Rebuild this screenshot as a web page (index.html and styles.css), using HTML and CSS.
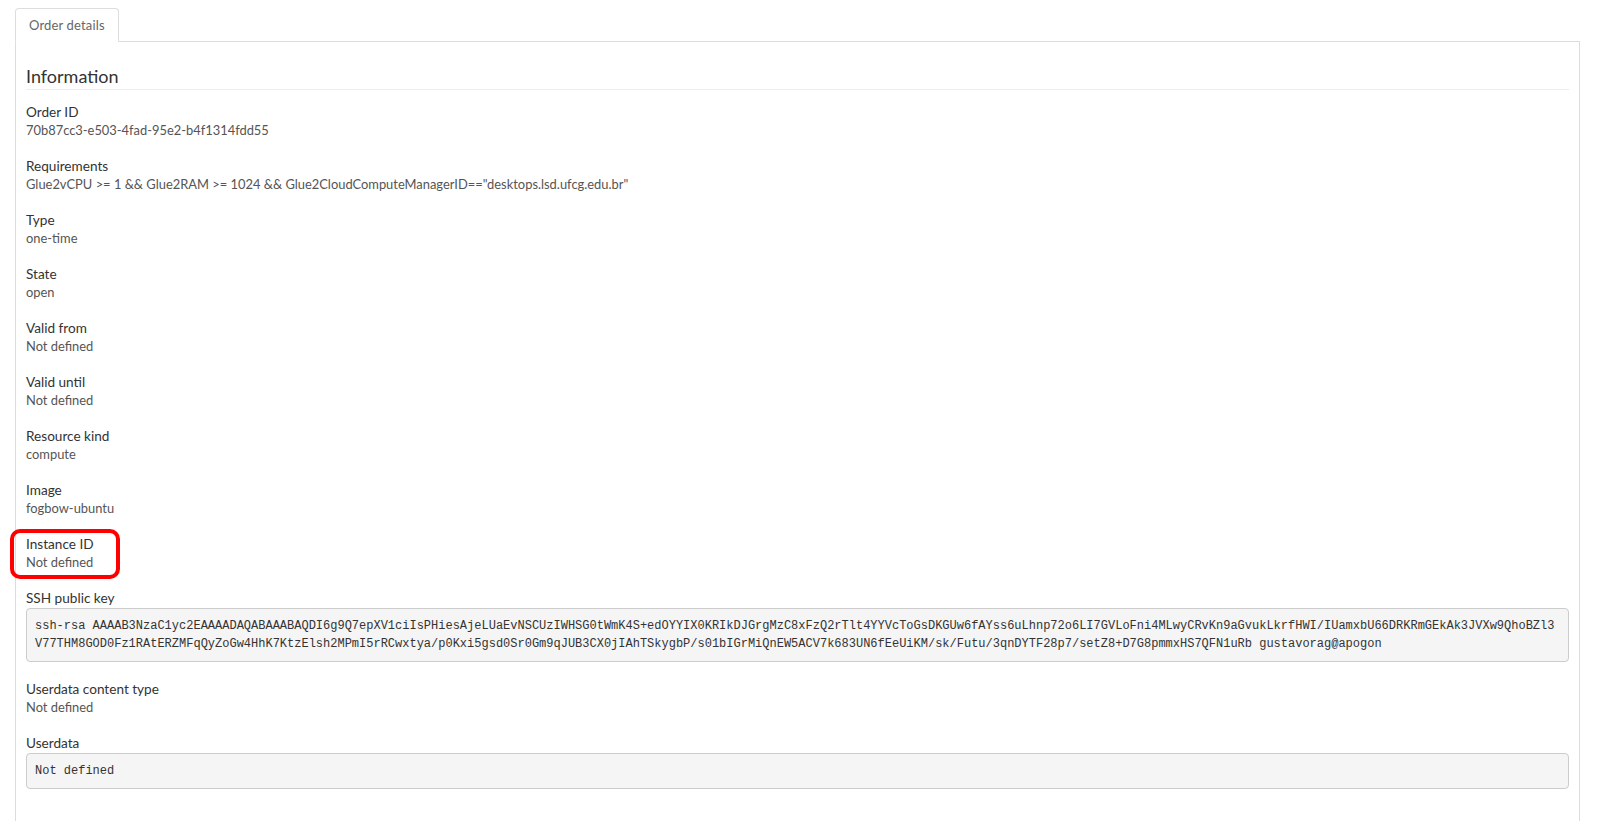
FILE: index.html
```html
<!DOCTYPE html>
<html lang="en">
<head>
<meta charset="utf-8">
<title>Order details</title>
<link rel="stylesheet" href="styles.css">
</head>
<body>
<ul class="tabs">
  <li class="tab active">Order details</li>
</ul>
<div class="panel">
  <h4 class="section-title">Information</h4>
  <div class="fields">
    <div class="field">
      <div class="label">Order ID</div>
      <div class="value">70b87cc3-e503-4fad-95e2-b4f1314fdd55</div>
    </div>
    <div class="field">
      <div class="label">Requirements</div>
      <div class="value">Glue2vCPU &gt;= 1 &amp;&amp; Glue2RAM &gt;= 1024 &amp;&amp; Glue2CloudComputeManagerID=="desktops.lsd.ufcg.edu.br"</div>
    </div>
    <div class="field">
      <div class="label">Type</div>
      <div class="value">one-time</div>
    </div>
    <div class="field">
      <div class="label">State</div>
      <div class="value">open</div>
    </div>
    <div class="field">
      <div class="label">Valid from</div>
      <div class="value">Not defined</div>
    </div>
    <div class="field">
      <div class="label">Valid until</div>
      <div class="value">Not defined</div>
    </div>
    <div class="field">
      <div class="label">Resource kind</div>
      <div class="value">compute</div>
    </div>
    <div class="field">
      <div class="label">Image</div>
      <div class="value">fogbow-ubuntu</div>
    </div>
    <div class="field highlighted">
      <div class="label">Instance ID</div>
      <div class="value">Not defined</div>
    </div>
    <div class="field">
      <div class="label">SSH public key</div>
      <pre class="code">ssh-rsa AAAAB3NzaC1yc2EAAAADAQABAAABAQDI6g9Q7epXV1ciIsPHiesAjeLUaEvNSCUzIWHSG0tWmK4S+edOYYIX0KRIkDJGrgMzC8xFzQ2rTlt4YYVcToGsDKGUw6fAYss6uLhnp72o6LI7GVLoFni4MLwyCRvKn9aGvukLkrfHWI/IUamxbU66DRKRmGEkAk3JVXw9QhoBZl3
V77THM8GOD0Fz1RAtERZMFqQyZoGw4HhK7KtzElsh2MPmI5rRCwxtya/p0Kxi5gsd0Sr0Gm9qJUB3CX0jIAhTSkygbP/s01bIGrMiQnEW5ACV7k683UN6fEeUiKM/sk/Futu/3qnDYTF28p7/setZ8+D7G8pmmxHS7QFN1uRb gustavorag@apogon</pre>
    </div>
    <div class="field">
      <div class="label">Userdata content type</div>
      <div class="value">Not defined</div>
    </div>
    <div class="field">
      <div class="label">Userdata</div>
      <pre class="code">Not defined</pre>
    </div>
  </div>
</div>
</body>
</html>
```
FILE: styles.css
```css
html, body {
  background: #fff;
}

body {
  margin: 0;
  padding: 8px 18px 0 15px;
  font-family: Lato, "Liberation Sans", sans-serif;
  color: #333;
}

.tabs {
  list-style: none;
  margin: 0;
  padding: 0;
  display: flex;
  height: 33px;
  border-bottom: 1px solid #ddd;
}

.tab {
  height: 32px;
  line-height: 32px;
  padding: 0 13px;
  font-size: 13px;
  letter-spacing: 0.15px;
  color: #666;
  background: #fff;
  border: 1px solid #ddd;
  border-bottom-color: #fff;
  border-radius: 4px 4px 0 0;
  margin-bottom: -1px;
}

.panel {
  border: 1px solid #ddd;
  border-top: none;
  padding: 23px 10px 60px 10px;
}

.section-title {
  margin: 0;
  font-size: 18px;
  font-weight: 400;
  line-height: 22px;
  color: #333;
  padding-bottom: 2px;
  border-bottom: 1px solid #eee;
}

.fields {
  display: flex;
  flex-direction: column;
  gap: 18px;
  padding-top: 13px;
}

.field {
  position: relative;
}

.label {
  font-size: 13.6px;
  line-height: 18px;
  color: #333;
}

.value {
  font-size: 12.9px;
  line-height: 18px;
  color: #555;
}

.code {
  margin: 1px 0 0 0;
  padding: 8px;
  font-family: "Liberation Mono", "DejaVu Sans Mono", monospace;
  font-size: 12px;
  line-height: 18px;
  color: #333;
  background: #f5f5f5;
  border: 1px solid #ccc;
  border-radius: 4px;
  white-space: pre;
  overflow: hidden;
}

.highlighted::after {
  content: "";
  position: absolute;
  top: -6px;
  left: -16px;
  width: 110px;
  height: 50px;
  box-sizing: border-box;
  border: 4px solid #f00;
  border-radius: 10px;
}
```
